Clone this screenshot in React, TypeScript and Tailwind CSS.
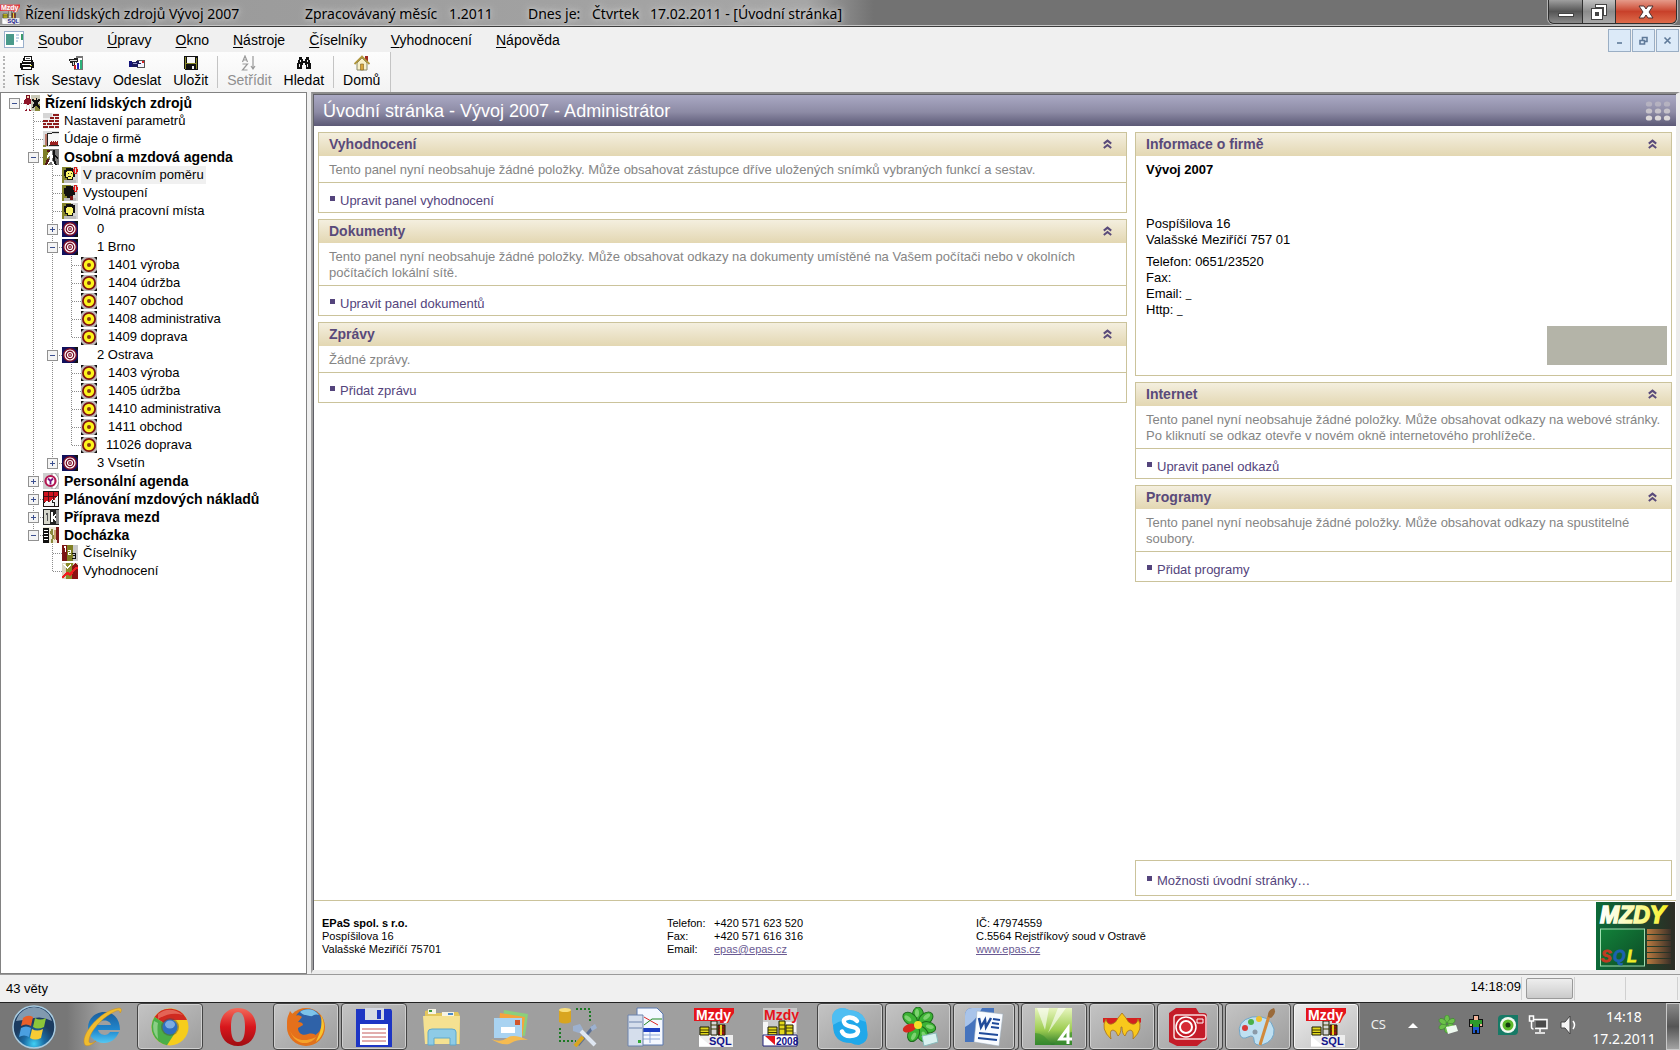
import React from "react";

type P = { children?: React.ReactNode };

/* ---------- small 16px pixel icons ---------- */

function Px({ children }: P) {
  return (
    <svg viewBox="0 0 16 16" className="size-4 shrink-0" shapeRendering="crispEdges" aria-hidden="true">
      {children}
    </svg>
  );
}

const PeopleIcon = () => (
  <Px>
    <path d="M7 0h9v16H7z" fill="#c9c9b8" />
    <path d="M11 9h5v7h-5z" fill="#8a8a3c" />
    <path d="M2 0h4v4H2z" fill="#7a1020" />
    <path d="M3 1h2v2H3z" fill="#f2d5b0" />
    <path d="M1 4h6v5H6v6h1v1H5v-6H3v6H1v-1h1V9H0V5h1z" fill="#8e1428" />
    <path d="M2 9h1v5H2zM5 9h1v5H5z" fill="#e8e8e8" />
    <path d="M8 4h2V3h3v2l2-1h1v1l-2 2v2l2 3v2h-1l-3-4-2 3H8l2-5-2-2z" fill="#111" />
    <path d="M10 3h2v2h-2z" fill="#f2d5b0" />
  </Px>
);
const BricksIcon = () => (
  <Px>
    <path d="M0 0h16v16H0z" fill="#f1f1f1" />
    <path d="M0 0h9v5H0z" fill="#d6d6d6" />
    <path d="M10 1h6v2h-6zM7 4h4v2H7zM12 4h4v2h-4zM0 7h5v2H0zM6 7h5v2H6zM12 7h4v2h-4zM0 10h3v2H0zM4 10h5v2H4zM10 10h6v2h-6zM0 13h5v2H0zM6 13h5v2H6zM12 13h4v2h-4z" fill="#8e1c1c" />
  </Px>
);
const FactoryIcon = () => (
  <Px>
    <path d="M0 0h16v16H0z" fill="#dcdcdc" />
    <path d="M5 3h11v11H5z" fill="#f7f7f7" />
    <path d="M2 3h2v12H2z" fill="#b9786a" />
    <path d="M4 3V2h5V1h7v1H9v1H5v12H4z" fill="#222" />
    <path d="M7 11l2-2v2l2-2v2l2-2v2l2-2v5H7z" fill="#9a2020" />
    <path d="M0 14h3v2H0z" fill="#8a8a3c" />
    <path d="M6 14h10v1H6z" fill="#222" />
  </Px>
);
const WalkerIcon = () => (
  <Px>
    <path d="M0 0h6v16H0z" fill="#7f7f24" />
    <path d="M6 0h10v16H6z" fill="#777" />
    <path d="M4 1h3v2H4zM4 10h2l-1 6H2z" fill="#541717" />
    <path d="M7 2h2v3l2 3v1H9v2l3 4v1h-2l-2-4-3 4H4l3-6V6L4 9V7z" fill="#fff" />
    <path d="M10 1h2v4l3 4-1 1-2-2v3l2 5h-2l-2-5V5z" fill="#111" />
  </Px>
);
function FaceIcon({ variant }: { variant: "in" | "out" | "free" }) {
  return (
    <Px>
      <path d="M0 0h11v16H0z" fill="#85852b" />
      <path d="M9 0h7v16H9z" fill="#d3d3d3" />
      <path d="M2 13h12v3H2z" fill="#bdbdbd" />
      <path d="M4 1h7v1h2v8h-2v3H5v-2H3V9H2V3h2z" fill="#111" />
      {variant === "out" ? (
        <path d="M8 11h3v4H8z" fill="#7b1515" />
      ) : (
        <path d="M5 4h5v1h1v5h-1v2H6v-2H4V5h1z" fill="#f9f46a" />
      )}
      {variant === "in" && <path d="M6 6h1v1H6zM9 6h1v1H9zM6 9h3v1H6z" fill="#222" />}
      {variant !== "free" && <path d="M12 0h3v2h1v3h-1v2h-3V5h-1V2h1zM13 1v5h1V1z" fill="#d81a1a" fillRule="evenodd" />}
    </Px>
  );
}
const TargetIcon = () => (
  <svg viewBox="0 0 16 16" className="size-4 shrink-0" aria-hidden="true">
    <rect width="16" height="16" fill="#10105c" />
    <path d="M12 0h4v4zM12 16h4v-4z" fill="#111" />
    <circle cx="8" cy="8" r="7" fill="#7d0f28" />
    <circle cx="8" cy="8" r="5" fill="none" stroke="#fff" strokeWidth="1.200" />
    <circle cx="8" cy="8" r="2.500" fill="none" stroke="#fff" strokeWidth="1.200" />
    <circle cx="8" cy="8" r=".8" fill="#fff" />
  </svg>
);
const YellowTargetIcon = () => (
  <svg viewBox="0 0 16 16" className="size-4 shrink-0" aria-hidden="true">
    <rect width="16" height="16" fill="#bdb9b9" />
    <path d="M0 0h3L0 3zM16 0h-3l3 3zM0 16h3l-3-3zM16 16h-3l3-3z" fill="#111" />
    <circle cx="8" cy="8" r="7" fill="#7d1410" />
    <circle cx="8" cy="8" r="5.200" fill="#fdf51c" />
    <circle cx="8" cy="8" r="2" fill="#8a3a12" />
  </svg>
);
const PersonalIcon = () => (
  <svg viewBox="0 0 16 16" className="size-4 shrink-0" aria-hidden="true">
    <rect width="16" height="16" fill="#cfcfcf" />
    <path d="M9 0h3q4 4 4 8t-4 8H9z" fill="#fff" stroke="#999" />
    <circle cx="7.500" cy="8" r="5" fill="#fff" stroke="#b31651" strokeWidth="2.200" />
    <path d="M5 5.500l2.500 2.500L10 5.500M7.500 8v3.500" stroke="#7a1280" strokeWidth="1.800" fill="none" />
  </svg>
);
const ChartIcon = () => (
  <Px>
    <path d="M0 0h16v16H0z" fill="#1c1010" />
    <path d="M1 1h14v10H1z" fill="#d01420" />
    <path d="M5 1h1v10H5zM10 1h1v10h-1zM1 5h14v1H1z" fill="#501018" />
    <path d="M1 15v-3l3-2 2 2 3-4 2 2 3-5h1v10z" fill="#f3f3f3" />
    <path d="M9 9h1v2h2v4h-1v-3H9z" fill="#222" />
  </Px>
);
const PayIcon = () => (
  <Px>
    <path d="M0 0h16v16H0z" fill="#222" />
    <path d="M1 1h6v14H1z" fill="#d7d7cc" />
    <path d="M3 4h2v8H4V6H3z" fill="#555" />
    <path d="M8 3h2v4l3-3h1v1l-2 3 2 4h-2l-2-3v4H8z" fill="#fff" />
    <path d="M13 1h3v14h-3z" fill="#8d8d8d" />
  </Px>
);
const AttendanceIcon = () => (
  <Px>
    <path d="M0 0h16v16H0z" fill="#ede9d8" />
    <path d="M0 1h6v15H0z" fill="#111" />
    <path d="M1 3h4v1H1zM1 6h4v1H1zM1 9h4v1H1zM1 12h4v1H1z" fill="#fff" />
    <path d="M8 2h2v4l1 3-1 7H8l1-7-2-2z" fill="#8a8a3c" />
    <path d="M13 0h3v16h-2l-1-6z" fill="#7d1a1a" />
    <path d="M11 3h2v8l-2 3z" fill="#c8a46a" />
  </Px>
);
const DigitsIcon = () => (
  <Px>
    <path d="M0 0h16v16H0z" fill="#7f7f24" />
    <path d="M0 0h5v16H0z" fill="#7b1515" />
    <path d="M11 0h5v16h-5z" fill="#c9c9c9" />
    <path d="M2 1h2v6H3V3H2zM6 5h3v3H7v1h2v1H6V7h2V6H6z" fill="#fff" />
    <path d="M10 8h4v6h-4v-1h3v-2h-2v-1h2V9h-3z" fill="#111" />
  </Px>
);
const TrendIcon = () => (
  <Px>
    <path d="M0 0h16v16H0z" fill="#d9d4bf" />
    <path d="M4 0h7v16H4z" fill="#8a8a2a" />
    <path d="M10 3l3-3 3 3v13h-6z" fill="#8c1212" />
    <path d="M0 15v-2l5-4 3 1 5-6h3v2h-2L9 13l-4-1-4 3z" fill="#f02020" />
    <path d="M1 1h2v1h1v1h1v1h1V3h1V2h1V1h1v2H8v1H7v1H6v1H5V5H4V4H3V3H2V2H1z" fill="#fff" />
  </Px>
);

/* ---------- Mzdy application icon ---------- */

function MzdyIcon({ year, className }: { year?: boolean; className: string }) {
  const red = "#e5141b";
  return (
    <svg viewBox="0 0 40 40" className={className} aria-hidden="true">
      {year ? <path d="M1 1h34v38H1z" fill="#c9c9c9" /> : <path d="M5 28h34v12H5z" fill="#eee" />}
      {year && <path d="M1 15h5v13H1zM24 15h10v10H24z" fill="#f6f6f6" />}
      <g stroke="#1c1c00" strokeWidth="1">
        <path d="M6 20h9v8H6z" fill="#e2d71d" />
        <path d="M17 14h6v14h-6z" fill={year ? "#e2d71d" : "#d7d7d7"} />
        <path d="M24 18h7v10h-7z" fill={year ? "#e2d71d" : "#9c1414"} />
        <path d="M6 23h9M6 25.500h9M24 21h7M24 24h7M17 18h6M17 22h6" stroke="#3c3a00" />
      </g>
      {!year && <path d="M26 18h2v10h-2z" fill="#e8d01d" />}
      {!year && <path d="M0 1h40v5l-3 4-3 6h-8v-2H0z" fill={red} />}
      <text
        x="2"
        y="12.500"
        fontSize="14"
        fontWeight="bold"
        fontFamily="Liberation Sans, sans-serif"
        fill={year ? red : "#fff"}
      >
        Mzdy
      </text>
      {year ? <path d="M1 28h34v11H1z" fill="#fff" stroke="#23237a" /> : null}
      <path d={year ? "M3 29h10v9z" : "M5 29l12 10H5z"} fill={year ? red : "#fff"} />
      <text x={year ? 14 : 15} y="38" fontSize={year ? 10 : 11} fontWeight="bold" fontFamily="Liberation Sans, sans-serif" fill="#14148c">
        {year ? "2008" : "SQL"}
      </text>
    </svg>
  );
}

/* ---------- window chrome ---------- */

function TitleBar() {
  return (
    <header className="flex h-[27px] items-stretch border-b border-[#3c3c3c] bg-linear-to-r from-[#979797] via-[#a6a6a6] via-48% to-[#727272] to-52% shadow-[inset_0_-1px_0_#c4c4c4]">
      <div className="flex flex-1 items-center pt-px font-['Noto_Sans','Open_Sans',sans-serif] text-sm whitespace-pre text-black [text-shadow:0_0_8px_#ddd,0_0_4px_#ccc]">
        <MzdyIcon className="mr-[5px] size-5 shrink-0" />
        <span className="w-[280px]">Řízení lidských zdrojů Vývoj 2007</span>
        <span className="w-[144px]">Zpracovávaný měsíc</span>
        <span className="w-[79px]">1.2011</span>
        <span className="w-[64px]">Dnes je:</span>
        <span className="w-[58px]">Čtvrtek</span>
        <span>17.02.2011 - [Úvodní stránka]</span>
      </div>
      <div className="mr-[3px] flex h-6 overflow-hidden rounded-b-md border border-t-0 border-[#2f2f2f] shadow-[0_0_0_1px_#b5b5b5]">
        <button aria-label="Minimalizovat" className="flex w-[34px] items-end justify-center border-r border-[#2f2f2f] bg-linear-to-b from-[#9f9f9f] via-[#555] via-50% to-[#8b8b8b] pb-1.5">
          <span className="h-1 w-4 border border-[#444] bg-white" />
        </button>
        <button aria-label="Obnovit" className="flex w-[33px] items-center justify-center border-r border-[#2f2f2f] bg-linear-to-b from-[#c2c2c2] via-[#8b8b8b] via-50% to-[#a9a9a9]">
          <svg viewBox="0 0 18 18" className="size-[18px]" aria-hidden="true">
            <path d="M5 1h12v12h-4v4H1V5h4z" fill="#444" />
            <path d="M6 2h10v10h-2V4H6zM2 6h10v10H2zM5 9v4h4V9z" fill="#fff" fillRule="evenodd" />
          </svg>
        </button>
        <button aria-label="Zavřít" className="flex w-[60px] items-center justify-center bg-linear-to-b from-[#e59a8a] via-[#c8402a] via-50% to-[#dd6a4a]">
          <svg viewBox="0 0 16 14" className="h-3.5 w-4" aria-hidden="true">
            <path d="M1 1h5l2 3 2-3h5l-4 6 4 6h-5l-2-3-2 3H1l4-6z" fill="#fff" stroke="#4a3030" strokeWidth="1" />
          </svg>
        </button>
      </div>
    </header>
  );
}

const menus = ["Soubor", "Úpravy", "Okno", "Nástroje", "Číselníky", "Vyhodnocení", "Nápověda"];

function MdiButton({ label, d }: { label: string; d: string }) {
  return (
    <button aria-label={label} className="flex size-[23px] items-center justify-center border border-[#9aaec4] bg-[#dceaf8]">
      <svg viewBox="0 0 9 9" className="size-[9px]" aria-hidden="true">
        <path d={d} stroke="#5f7a99" strokeWidth="1.600" fill="none" />
      </svg>
    </button>
  );
}

function MenuBar() {
  return (
    <nav className="flex h-[25px] items-center pl-1 text-sm">
      <svg viewBox="0 0 20 17" className="mr-[2px] h-[17px] w-5" aria-hidden="true">
        <rect x=".5" y=".5" width="19" height="16" fill="#fff" stroke="#9ab0cc" />
        <rect x="2" y="3" width="8" height="11" fill="#4a9a8a" />
        <path d="M12 4h3M12 7h3M12 10h2" stroke="#88aacc" />
        <rect x="17" y="3" width="2" height="6" fill="#3c9a6c" />
      </svg>
      <div className="flex">
        {menus.map((m) => (
          <button key={m} className="px-3 leading-6">
            <span className="underline underline-offset-2">{m[0]}</span>
            {m.slice(1)}
          </button>
        ))}
      </div>
      <div className="mr-px ml-auto flex gap-px pt-px">
        <MdiButton label="Minimalizovat okno" d="M2 7h5" />
        <MdiButton label="Obnovit okno" d="M1 4.500h4.500v3.500H1zM3.500 4V1.500h4.500v4H6" />
        <MdiButton label="Zavřít okno" d="M1.500 1.500l6 6M7.500 1.500l-6 6" />
      </div>
    </nav>
  );
}

function Tool({ label, children, disabled }: P & { label: string; disabled?: boolean }) {
  return (
    <button disabled={disabled} className="flex flex-col items-center px-1.5 pt-[3px] leading-[18px] disabled:text-[#8f8f8f]">
      {children}
      {label}
    </button>
  );
}

function Toolbar() {
  return (
    <div className="flex h-10">
      <div className="flex border-r border-[#c4c4c4] bg-linear-to-b from-[#fdfdfd] to-[#f3f3f3] pr-1 pl-[3px] text-sm">
        <span className="my-1 mr-[3px] w-0 border-l-2 border-dotted border-[#b5b5b5]" />
        <Tool label="Tisk">
          <Px>
            <path d="M5 1h8v4h1v2h1v6h-2v2H2v-2H1V8h2V6h1z" fill="#111" />
            <path d="M6 2h6v3H6zM4 6h8v1H4zM3 9h9v1H3zM4 12h8v2H4z" fill="#fff" />
            <path d="M7 3h4v1H7z" fill="#555" />
            <path d="M11 10h2v1h-2z" fill="#c9c93a" />
          </Px>
        </Tool>
        <Tool label="Sestavy">
          <Px>
            <path d="M8 1h7v14H6V8h2z" fill="#777" />
            <path d="M9 3h5v11H7V8h2z" fill="#fff" />
            <path d="M1 4l9-1v4H7v4H4V8H2V6H1z" fill="#222" />
            <path d="M2 5h7v1H2zM5 7h1v3H5z" fill="#d8d8d8" />
            <path d="M6 10h2v4H6z" fill="#c22" />
            <path d="M9 8h2v6H9z" fill="#22b" />
            <path d="M12 5h2v9h-2z" fill="#2bb37a" />
          </Px>
        </Tool>
        <Tool label="Odeslat">
          <Px>
            <path d="M8 5h8v8H8z" fill="#555" />
            <path d="M9 6h6v6H9z" fill="#f5f5ff" />
            <path d="M13 6h2v2h-2z" fill="#d22" />
            <path d="M0 6h3v6H0z" fill="#14147a" />
            <path d="M3 7h4V6h3v2h2v1H9v3H3z" fill="#1b1b5c" />
            <path d="M4 8h4v1H4z" fill="#9494c9" />
          </Px>
        </Tool>
        <Tool label="Uložit">
          <Px>
            <path d="M1 1h14v14H2l-1-1z" fill="#111" />
            <path d="M2 2h1v12H2zM13 3h1v11h-1zM3 8h10v1H3z" fill="#8a8a2a" />
            <path d="M4 2h8v6H4z" fill="#f7f7f7" />
            <path d="M9 11h2v3H9z" fill="#eee" />
          </Px>
        </Tool>
        <span className="mx-[3px] my-1 border-l border-[#c4c4c4]" />
        <Tool label="Setřídit" disabled>
          <svg viewBox="0 0 16 16" className="size-4" fill="none" stroke="#999" strokeWidth="1.200" aria-hidden="true">
            <path d="M1.500 7L4 1l2.500 6M2.500 5h3M1.500 9h5l-5 6h5M12 1v12M10 11l2 3 2-3" />
          </svg>
        </Tool>
        <Tool label="Hledat">
          <Px>
            <path d="M3 2h3v2h1v2h2V4h1V2h3v3h1v3h1v6h-5v-4H9V8H7v2H6v4H1V8h1V5h1z" fill="#111" />
            <path d="M4 5h1v2H4zM3 9h1v3H3zM11 5h1v2h-1zM11 9h1v3h-1z" fill="#eee" />
          </Px>
        </Tool>
        <span className="mx-[3px] my-1 border-l border-[#c4c4c4]" />
        <Tool label="Domů">
          <svg viewBox="0 0 16 16" className="size-4" aria-hidden="true">
            <path d="M11 1h3v5h-3z" fill="#a02a20" />
            <path d="M3 8v7h10V8L8 3z" fill="#f8f0c8" stroke="#8a8a6a" />
            <path d="M.5 9L8 1.500 15.500 9" stroke="#b0963a" strokeWidth="1.800" fill="none" />
            <path d="M6.500 9h3v6h-3z" fill="#d8a63a" stroke="#7d6224" strokeWidth=".6" />
          </svg>
        </Tool>
      </div>
    </div>
  );
}

/* ---------- tree ---------- */

/* Guide letters: "." blank, "|" line, "t" branch, "l" last branch,
   "+" / "-" expander with line through, "P" / "M" expander closing the line, "R" root. */
type Node = { g: string; icon: React.ReactNode; t: string; bold?: boolean; sel?: boolean; pad?: string };

const leaf = (t: string, g: string, pad = "pl-1.5"): Node => ({ t, g, icon: <YellowTargetIcon />, pad });

const nodes: Node[] = [
  { g: "R", icon: <PeopleIcon />, t: "Řízení lidských zdrojů", bold: true },
  { g: ".t", icon: <BricksIcon />, t: "Nastavení parametrů" },
  { g: ".t", icon: <FactoryIcon />, t: "Údaje o firmě" },
  { g: ".-", icon: <WalkerIcon />, t: "Osobní a mzdová agenda", bold: true },
  { g: ".|t", icon: <FaceIcon variant="in" />, t: "V pracovním poměru", sel: true },
  { g: ".|t", icon: <FaceIcon variant="out" />, t: "Vystoupení" },
  { g: ".|t", icon: <FaceIcon variant="free" />, t: "Volná pracovní místa" },
  { g: ".|+", icon: <TargetIcon />, t: "0", pad: "pl-3.5" },
  { g: ".|-", icon: <TargetIcon />, t: "1 Brno", pad: "pl-3.5" },
  leaf("1401 výroba", ".||t"),
  leaf("1404 údržba", ".||t"),
  leaf("1407 obchod", ".||t"),
  leaf("1408 administrativa", ".||t"),
  leaf("1409 doprava", ".||l"),
  { g: ".|-", icon: <TargetIcon />, t: "2 Ostrava", pad: "pl-3.5" },
  leaf("1403 výroba", ".||t"),
  leaf("1405 údržba", ".||t"),
  leaf("1410 administrativa", ".||t"),
  leaf("1411 obchod", ".||t"),
  leaf("11026 doprava", ".||l", "pl-1"),
  { g: ".|P", icon: <TargetIcon />, t: "3 Vsetín", pad: "pl-3.5" },
  { g: ".+", icon: <PersonalIcon />, t: "Personální agenda", bold: true },
  { g: ".+", icon: <ChartIcon />, t: "Plánování mzdových nákladů", bold: true },
  { g: ".+", icon: <PayIcon />, t: "Příprava mezd", bold: true },
  { g: ".M", icon: <AttendanceIcon />, t: "Docházka", bold: true },
  { g: "..t", icon: <DigitsIcon />, t: "Číselníky" },
  { g: "..l", icon: <TrendIcon />, t: "Vyhodnocení" },
];

function Guide({ c }: { c: string }) {
  const full = "|t+-".includes(c);
  const half = "lPM".includes(c);
  const box = "+-PMR".includes(c);
  return (
    <svg viewBox="0 0 19 18" className="h-[18px] w-[19px] shrink-0" shapeRendering="crispEdges" aria-hidden="true">
      <g stroke="#8c8c8c" strokeDasharray="1 1">
        {(full || half) && <path d={full ? "M9.500 0v18" : "M9.500 0v9"} />}
        {c !== "." && c !== "|" && <path d="M10 9.500h9" />}
      </g>
      {box && (
        <>
          <rect x="4.500" y="4.500" width="10" height="10" rx="1" fill="#f4f4f4" stroke="#919191" />
          <path d={"+P".includes(c) ? "M7 9.500h5M9.500 7v5" : "M7 9.500h5"} stroke="#3b4f8f" />
        </>
      )}
    </svg>
  );
}

function Tree() {
  return (
    <aside className="w-[307px] shrink-0 overflow-hidden border border-[#828282] bg-white pt-px pl-1 text-black">
      <ul role="tree">
        {nodes.map((n) => (
          <li key={n.t} role="treeitem" aria-selected={!!n.sel} className="flex h-[18px] items-center whitespace-nowrap">
            {n.g.split("").map((c, i) => (
              <Guide key={i} c={c} />
            ))}
            {n.icon}
            <span className={n.pad ?? ""}>
              <span className={`${n.bold ? "text-sm font-bold" : "text-[13px]"} ${n.sel ? "bg-[#f0f0f0]" : ""} ml-[3px] block px-0.5 leading-[18px]`}>{n.t}</span>
            </span>
          </li>
        ))}
      </ul>
    </aside>
  );
}

/* ---------- main page ---------- */

function Panel({ title, children, link }: P & { title: string; link?: string }) {
  return (
    <section className="border border-[#cbc39b] text-[13px] leading-4">
      <div className="flex h-[23px] items-center bg-linear-to-b from-[#f4efdf] to-[#e3d7b2] pr-[14px] pb-0.5 pl-2.5">
        <h2 className="flex-1 text-sm leading-5 font-bold text-[#594a7a]">{title}</h2>
        <button aria-label={`Sbalit ${title}`}>
          <svg viewBox="0 0 9 10" className="h-2.5 w-[9px]" fill="none" stroke="#594a7a" strokeWidth="2" aria-hidden="true">
            <path d="M.8 4.600L4.500 1.600l3.700 3M.8 9L4.500 6 8.200 9" />
          </svg>
        </button>
      </div>
      {children}
      {link && (
        <div className="border-t border-[#cbc39b]">
          <Bullet>{link}</Bullet>
        </div>
      )}
    </section>
  );
}

function Bullet({ children }: P) {
  return (
    <a href="#" className="flex gap-[5px] pt-2.5 pb-[3px] pl-[11px] text-[13px] leading-4 text-[#54447c]">
      <span className="mt-[3px] size-[5px] bg-[#54447c]" />
      {children}
    </a>
  );
}

const Note = ({ children }: P) => <p className="pt-1.5 pr-1 pb-1 pl-2.5 text-[#858585]">{children}</p>;

function Page() {
  return (
    <main className="ml-1 flex min-w-0 flex-1 flex-col border-t-2 border-r-4 border-b-4 border-l-2 border-t-[#8c8c8c] border-r-[#ececec] border-b-[#ececec] border-l-[#a0a0a0] bg-white">
      <div className="flex flex-1 flex-col border-t border-l border-[#5f5f66]">
        <div className="flex h-[31px] items-center justify-between bg-linear-to-b from-[#aaa9c4] via-[#8d8ba5] via-55% to-[#5c5976] pr-1 pl-[9px]">
          <h1 className="text-lg leading-6 text-white">Úvodní stránka - Vývoj 2007 - Administrátor</h1>
          <svg viewBox="0 0 27 20" className="h-5 w-[27px]" aria-hidden="true">
            {[3, 10, 17].map((y) =>
              [4, 13, 22].map((x) => <ellipse key={`${x}-${y}`} cx={x} cy={y} rx="3.200" ry="2.600" fill={y === 17 ? "#dcd8d8" : y === 10 ? "#c6c2c9" : "#b5b2c0"} />)
            )}
          </svg>
        </div>
        <div className="grid flex-1 grid-cols-[809fr_537fr] gap-2 px-1 pt-1.5 pb-1">
          <div className="flex flex-col gap-1.5">
            <Panel title="Vyhodnocení" link="Upravit panel vyhodnocení">
              <Note>Tento panel nyní neobsahuje žádné položky. Může obsahovat zástupce dříve uložených snímků vybraných funkcí a sestav.</Note>
            </Panel>
            <Panel title="Dokumenty" link="Upravit panel dokumentů">
              <Note>
                Tento panel nyní neobsahuje žádné položky. Může obsahovat odkazy na dokumenty umístěné na Vašem počítači nebo v okolních
                <br />
                počítačích lokální sítě.
              </Note>
            </Panel>
            <Panel title="Zprávy" link="Přidat zprávu">
              <Note>Žádné zprávy.</Note>
            </Panel>
          </div>
          <div className="flex flex-col gap-1.5">
            <Panel title="Informace o firmě">
              <div className="pt-1.5 pl-2.5 text-black">
                <p className="mb-[38px] font-bold">Vývoj 2007</p>
                <p>Pospíšilova 16</p>
                <p className="mb-1.5">Valašské Meziříčí 757 01</p>
                <p>Telefon: 0651/23520</p>
                <p>Fax:</p>
                <p>Email: <a href="#" className="text-[10px] leading-none">_</a></p>
                <p>Http: <a href="#" className="text-[10px] leading-none">_</a></p>
              </div>
              <div className="mt-2 mr-1 mb-2.5 ml-auto h-[39px] w-[120px] bg-[#b4b4a8]" />
            </Panel>
            <Panel title="Internet" link="Upravit panel odkazů">
              <Note>
                Tento panel nyní neobsahuje žádné položky. Může obsahovat odkazy na webové stránky.
                <br />
                Po kliknutí se odkaz otevře v novém okně internetového prohlížeče.
              </Note>
            </Panel>
            <Panel title="Programy" link="Přidat programy">
              <Note>
                Tento panel nyní neobsahuje žádné položky. Může obsahovat odkazy na spustitelné
                <br />
                soubory.
              </Note>
            </Panel>
            <div className="mt-auto border border-[#cbc39b] pt-0.5 pb-[3px]">
              <Bullet>Možnosti úvodní stránky…</Bullet>
            </div>
          </div>
        </div>
        <footer className="grid h-[70px] grid-cols-[345fr_309fr_620fr_auto] border-t border-[#cbc39b] pl-2 text-[11px] leading-[13px] text-black">
          <address className="pt-4 not-italic">
            <b>EPaS spol. s r.o.</b>
            <br />
            Pospíšilova 16
            <br />
            Valašské Meziříčí 75701
          </address>
          <dl className="grid grid-cols-[47px_1fr] content-start pt-4">
            <dt>Telefon:</dt>
            <dd>+420 571 623 520</dd>
            <dt>Fax:</dt>
            <dd>+420 571 616 316</dd>
            <dt>Email:</dt>
            <dd><a href="#" className="text-[#6a5a92] underline">epas@epas.cz</a></dd>
          </dl>
          <p className="pt-4">
            IČ: 47974559
            <br />
            C.5564 Rejstříkový soud v Ostravě
            <br />
            <a href="#" className="text-[#6a5a92] underline">www.epas.cz</a>
          </p>
          <svg viewBox="0 0 79 68" className="mt-px mr-px h-[68px] w-[79px]" role="img" aria-label="MZDY SQL">
            <defs>
              <linearGradient id="lg" x2="1"><stop stopColor="#0c6a38" /><stop offset="1" stopColor="#2c2c24" /></linearGradient>
              <linearGradient id="lt" x2="1"><stop stopColor="#fff" /><stop offset=".5" stopColor="#fbfbb0" /><stop offset="1" stopColor="#f6f11e" /></linearGradient>
              <linearGradient id="lb" x2="1"><stop stopColor="#b9793f" /><stop offset="1" stopColor="#3a3028" /></linearGradient>
              <linearGradient id="lq" x2="1" y2="1"><stop stopColor="#12823a" /><stop offset="1" stopColor="#0d4a26" /></linearGradient>
            </defs>
            <rect width="79" height="68" fill="url(#lg)" />
            <text x="4" y="21" fontSize="23" fontWeight="bold" fontStyle="italic" fontFamily="Liberation Sans, sans-serif" fill="url(#lt)" stroke="url(#lt)" strokeWidth="1.500">MZDY</text>
            <rect x="4.500" y="27" width="44" height="37" fill="url(#lq)" stroke="#9fe0b0" />
            {[27, 33, 39, 45, 51, 57].map((y) => <rect key={y} x="51" y={y} width="24" height="5" fill="url(#lb)" />)}
            <g fontSize="16" fontWeight="bold" fontStyle="italic" fontFamily="Liberation Sans, sans-serif" strokeWidth=".8">
              <text x="5" y="60" fill="#c23a22" stroke="#c23a22">S</text>
              <text x="17" y="60" fill="#1c62b0" stroke="#1c62b0">Q</text>
              <text x="31" y="60" fill="#f0ee28" stroke="#f0ee28">L</text>
            </g>
          </svg>
        </footer>
      </div>
    </main>
  );
}

/* ---------- taskbar ---------- */

function Big({ children }: P) {
  return <svg viewBox="0 0 40 40" className="size-10" aria-hidden="true">{children}</svg>;
}

const tasks: { name: string; kind?: "open" | "active"; stack?: boolean; icon: React.ReactNode }[] = [
  {
    name: "Internet Explorer",
    icon: (
      <Big>
        <defs><linearGradient id="ie" x2="0" y2="1"><stop stopColor="#1c5e9c" /><stop offset=".6" stopColor="#2089d0" /><stop offset="1" stopColor="#55c8f2" /></linearGradient></defs>
        <path fillRule="evenodd" d="M22 5c10 0 16 7 16 18H16c1 5 9 7 12 2h9c-3 7-8 11-15 11-9 0-16-7-16-15.500S13 5 22 5zm-6 13h13c-1-6-12-6-13 0z" fill="url(#ie)" />
        <path d="M3 38C-3 29 18 3 37 1c3 0 3 3 1 5 0-3-2-3-6-1C19 11 6 27 7 35c1 2 4 1 7-1-4 4-9 6-11 4z" fill="#f0bc2e" stroke="#c98d1c" strokeWidth=".5" />
      </Big>
    ),
  },
  {
    name: "Chrome", kind: "open",
    icon: (
      <Big>
        <circle cx="20" cy="20" r="18.500" fill="#f6cd1c" />
        <path d="M20 20L4.500 10A18.500 18.500 0 0 1 37 13H20z" fill="#cf2a20" />
        <path d="M8 7q12-9 25 1-12-4-25 4z" fill="#f08a7a" opacity=".6" />
        <path d="M20 20L4.500 10A18.500 18.500 0 0 0 17 38.200l9-14z" fill="#4aae48" />
        <path d="M4 14q-3 10 4 18-1-12 0-16z" fill="#a6dba0" opacity=".7" />
        <circle cx="20" cy="20" r="9" fill="#4a4a4a" opacity=".45" />
        <circle cx="20" cy="20" r="7.500" fill="#2f6fc0" />
        <ellipse cx="20" cy="17.500" rx="5" ry="4" fill="#9cc6f0" opacity=".7" />
      </Big>
    ),
  },
  {
    name: "Opera",
    icon: (
      <Big>
        <defs><linearGradient id="op" x2="0" y2="1"><stop stopColor="#f36a5a" /><stop offset=".5" stopColor="#d8161c" /><stop offset="1" stopColor="#a00d12" /></linearGradient></defs>
        <path fillRule="evenodd" d="M20 1c11 0 18 8 18 19s-7 19-18 19S2 31 2 20 9 1 20 1zm0 4c-5 0-7 6-7 15s2 15 7 15 7-6 7-15-2-15-7-15z" fill="url(#op)" />
      </Big>
    ),
  },
  {
    name: "Firefox", kind: "open",
    icon: (
      <Big>
        <circle cx="20" cy="20" r="19" fill="#e0721c" />
        <circle cx="22" cy="16" r="14" fill="#2f62a8" />
        <path d="M14 5c5-4 14-4 19 3-5-2-6 2-9 1s-6 0-10-4z" fill="#7cc3ea" />
        <path d="M35 8c5 9 4 20-5 27 2-6 7-12 5-27z" fill="#f8c52e" />
        <path d="M1 16C1 9 3 8 4 4l4 5c3-1 6-1 8 1l-4 5c3 0 5 1 5 3l-5 3c0 6 5 8 10 6 4-1 8 0 8 2-4 6-14 10-20 6C4 32 1 25 1 16z" fill="#e5701b" />
        <path d="M4 24c4 9 14 12 26 6-5 8-20 10-26-6z" fill="#f5a32a" />
      </Big>
    ),
  },
  {
    name: "Total Commander", kind: "open",
    icon: (
      <Big>
        <path d="M2 2h35l1 2v36H2z" fill="#1d35c4" />
        <path d="M11 1h19v12H11z" fill="#d6dae4" />
        <path d="M23 3h4v9h-4z" fill="#1d35c4" />
        <path d="M6 17h28v21H6z" fill="#fff" />
        <path d="M8 22h24M8 26h24M8 30h24M8 34h24" stroke="#c45a5a" />
      </Big>
    ),
  },
  {
    name: "Průzkumník",
    icon: (
      <Big>
        <path d="M3 4l8-2v4h8l2-1h15l2 4v28H3z" fill="#e3c65c" />
        <path d="M6 2h8v5H6zM20 5h12v4H20z" fill="#f6f3e4" />
        <path d="M7 3h3v2H7z" fill="#3c9a3c" />
        <path d="M26 6h5v2h-5z" fill="#4a8ac9" />
        <path d="M1 9h37l-1 28H3z" fill="#f5e191" />
        <path d="M6 25q0-3 4-3h20q4 0 4 3v13h-6v-7H12v7H6z" fill="#8ecbe6" stroke="#5fa9cc" />
      </Big>
    ),
  },
  {
    name: "Windows Live Mail",
    icon: (
      <Big>
        <path d="M14 3l24 4-3 22-24-3z" fill="#8bcf7c" />
        <path d="M10 6l25 4-3 22-24-3z" fill="#f5a43c" />
        <path d="M4 11h28v20H4z" fill="#a9d3f1" />
        <path d="M11 20h14v6H11z" fill="#fff" />
        <path d="M25 13h5v5h-5z" fill="#d2562c" />
        <path d="M1 32q10 4 16-1t21 2q-10-1-17 3T1 32z" fill="#f5bb50" />
      </Big>
    ),
  },
  {
    name: "Databáze",
    icon: (
      <Big>
        <path d="M18 2h14v14M2 21v13h16" stroke="#1c7a24" strokeWidth="2" strokeDasharray="2 2" fill="none" />
        <path d="M1 3v12q6 3 12 0V3z" fill="#d9a520" />
        <ellipse cx="7" cy="3" rx="6" ry="2" fill="#f8de7c" />
        <path d="M36 19L20 38" stroke="#5a6f94" strokeWidth="3" />
        <path d="M19 20l18 18" stroke="#dfe7f2" strokeWidth="4" />
        <path d="M25 30l-8 9" stroke="#d9a520" strokeWidth="4" />
        <path d="M15 19l7-2 3 5-4 4-6-2zM32 20l5-3 2 4-5 3z" fill="#9db1cf" />
      </Big>
    ),
  },
  {
    name: "Server",
    icon: (
      <Big>
        <path d="M11 1h20l6 6v31H11z" fill="#f4f8ff" stroke="#5a78b0" />
        <path d="M18 10l14 8" stroke="#d22" /><path d="M18 18l8-6h10" stroke="#282" fill="none" />
        <path d="M16 21h18v4H16z" fill="#1c3ec4" />
        <path d="M16 28h18M16 32h18M24 25v11" stroke="#8fa8d8" />
        <path d="M2 8h15v31H2z" fill="#d5deec" stroke="#6d83ac" />
        <path d="M3 15h13M3 21h13" stroke="#6d83ac" />
        <path d="M12 33h3v3h-3z" fill="#3a3" />
      </Big>
    ),
  },
  { name: "Mzdy SQL", icon: <MzdyIcon className="size-10" /> },
  { name: "Mzdy 2008", icon: <MzdyIcon year className="size-10" /> },
  {
    name: "Skype", kind: "open",
    icon: (
      <Big>
        <path d="M11 1q5 0 8 2 18 1 18 20 3 12-8 15-5 0-8-2Q3 36 3 18-1 3 11 1z" fill="#20a8ea" />
        <path d="M11 1q5 0 8 2 14 1 17 12Q20 8 3 18-1 3 11 1z" fill="#6fcdf6" opacity=".6" />
        <path d="M27 14q-3-4-8-3.500-6 1-5 4.500t7 4.500q7 1 7 5-1 4.500-8 4.500-6 0-8-4.500" stroke="#fff" strokeWidth="4.400" fill="none" strokeLinecap="round" />
      </Big>
    ),
  },
  {
    name: "ICQ", kind: "open",
    icon: (
      <Big>
        {[0, 51, 103, 154, 206, 308].map((a) => (
          <ellipse key={a} cx="20" cy="8" rx="5.500" ry="8" fill="#3cb334" stroke="#1c6a1c" transform={`rotate(${a} 20 18)`} />
        ))}
        {[0, 51, 103, 154, 206, 308].map((a) => (
          <ellipse key={a} cx="19" cy="6" rx="2" ry="4" fill="#a8e89a" opacity=".6" transform={`rotate(${a} 20 18)`} />
        ))}
        <ellipse cx="20" cy="9" rx="4" ry="7" fill="#d8281e" transform="rotate(250 20 18)" />
        <circle cx="20" cy="18" r="4" fill="#f3df2a" />
        <path d="M24 29l14-3 2 9-14 4z" fill="#d9f1f0" stroke="#8bb" />
      </Big>
    ),
  },
  {
    name: "Word", kind: "open", stack: true,
    icon: (
      <Big>
        <path d="M8 1h22v34H1V9q0-8 7-8z" fill="#4573bd" />
        <path d="M1 20Q12 14 18 1H8Q1 1 1 9z" fill="#a9c4ea" />
        <path d="M13 4l26 3-4 32-25-4z" fill="#f8fbff" stroke="#9ab" strokeWidth=".5" />
        <path d="M15 11l2 9 4-7 1 7 5-9" stroke="#1f4a9a" strokeWidth="2.500" fill="none" />
        <path d="M29 12l7 1M28 16l7 1M27 20l8 1M15 26l19 2M14 31l19 2" stroke="#1f4a9a" strokeWidth="2" />
      </Big>
    ),
  },
  {
    name: "Verze 4", kind: "open",
    icon: (
      <Big>
        <defs><linearGradient id="v4" x2="0" y2="1"><stop stopColor="#e7f5bd" /><stop offset=".6" stopColor="#9ccc50" /><stop offset="1" stopColor="#2c7a2c" /></linearGradient></defs>
        <path d="M1 1h37v37H1z" fill="url(#v4)" />
        <path d="M3 1l8 22 4-22zM24 1L14 26 32 1z" fill="#fff" opacity=".6" />
        <path d="M1 26q10 0 16 12H1zM38 25q-12 2-18 13h18z" fill="#3a8f2e" opacity=".6" />
        <path d="M34 37V21L26 32h12" stroke="#fff" strokeWidth="3" fill="none" />
      </Big>
    ),
  },
  {
    name: "Maska", kind: "open",
    icon: (
      <Big>
        <path d="M1 11h38v4l-4 5H5l-4-5z" fill="#d42020" />
        <path d="M9 32Q-2 22 4 12q1 6 6 5 4-1 6-6l4-5 4 5q2 5 6 6 5 1 6-5 6 10-5 20 1-9-3-9-3 0-5 6-3-2-3-9h-1q0 7-3 9-2-6-5-6-4 0-2 9z" fill="#f8c81c" stroke="#a8721a" strokeWidth=".8" />
      </Big>
    ),
  },
  {
    name: "Kamera", kind: "open", stack: true,
    icon: (
      <Big>
        <path d="M8 1h20l3 5h5q3 0 3 3v22q0 3-4 3l-6 5H9l-8-4V6z" fill="#c41c28" />
        <rect x="6" y="8" width="32" height="24" rx="3" fill="none" stroke="#f6dada" strokeWidth="1.500" />
        <circle cx="18" cy="20" r="10" fill="none" stroke="#fff" strokeWidth="1.500" />
        <circle cx="18" cy="20" r="6" fill="#d62a34" stroke="#fff" strokeWidth="2" />
        <path d="M29 12h6v4h-6z" fill="none" stroke="#fff" />
      </Big>
    ),
  },
  {
    name: "Malování", kind: "open",
    icon: (
      <Big>
        <path d="M2 28Q-2 14 14 10q18-3 22 12 1 12-12 16-8 1-8-5t-6-3-8-2z" fill="#bfe0f2" stroke="#6fa5c8" />
        <circle cx="7" cy="21" r="3" fill="#d83a3a" />
        <circle cx="13" cy="15" r="3" fill="#4ab04a" />
        <circle cx="21" cy="12" r="3" fill="#f0c02e" />
        <circle cx="17" cy="25" r="2.500" fill="#8a9aa8" />
        <path d="M22 38L31 9" stroke="#d18a3c" strokeWidth="3" />
        <path d="M30 10q-1-7 6-9 3 5-3 10z" fill="#9a6a3a" />
      </Big>
    ),
  },
  { name: "Mzdy SQL okno", kind: "active", icon: <MzdyIcon className="size-10" /> },
];

function Tray() {
  return (
    <div className="flex items-stretch font-['Noto_Sans','Open_Sans',sans-serif] text-white">
      <div className="mr-2 flex items-center gap-2.5 pb-1">
        <span className="mr-3 text-[13px] text-[#eee]">CS</span>
        <button aria-label="Zobrazit skryté ikony" className="mr-2.5">
          <svg viewBox="0 0 10 6" className="h-1.5 w-2.5" aria-hidden="true"><path d="M0 6l5-5 5 5z" fill="#fff" /></svg>
        </button>
        <svg viewBox="0 0 20 20" className="size-5" aria-hidden="true">
          {[0, 60, 120, 180, 240, 300].map((a) => <ellipse key={a} cx="9" cy="4" rx="2.500" ry="4" fill="#6cc04a" stroke="#2f7a2a" strokeWidth=".5" transform={`rotate(${a} 9 9)`} />)}
          <path d="M8 12l10-2 2 6-10 3z" fill="#effaf0" />
        </svg>
        <svg viewBox="0 0 16 20" className="h-5 w-4" shapeRendering="crispEdges" aria-hidden="true">
          <path d="M5 0h6v4h4v8h-3v7H4v-7H1V4h4z" fill="#111" />
          <path d="M6 1h4v4H6zM2 9h2v2H2zM12 9h2v2h-2z" fill="#f3b49a" />
          <path d="M2 5h12v4H2zM5 5h6v7H5z" fill="#2c9a2c" />
          <path d="M5 12h6v6H9v-3H7v3H5z" fill="#1c5ad0" />
        </svg>
        <svg viewBox="0 0 20 20" className="ml-1 size-5" aria-hidden="true">
          <path d="M0 4q0-4 4-4h16v16q0 4-4 4H0z" fill="#177a66" />
          <circle cx="10" cy="10" r="8" fill="#f4faf2" />
          <circle cx="10" cy="10" r="5.500" fill="#5cb82a" />
          <circle cx="10" cy="10" r="2.500" fill="#143a10" />
        </svg>
        <svg viewBox="0 0 20 20" className="size-5" fill="none" stroke="#fff" strokeWidth="1.500" aria-hidden="true">
          <path d="M6 4.500h13v9H7M12 14v3M7 18h10" />
          <path d="M8 6h10v6H8z" fill="#4a4a4a" stroke="none" />
          <path d="M1.500 1v5h4V1zM3.500 6v6q0 2 2 2" />
        </svg>
        <svg viewBox="0 0 20 20" className="size-5" aria-hidden="true">
          <path d="M3 7h4l5-6v18l-5-6H3z" fill="#f3f3f3" stroke="#444" />
          <path d="M15 6q3 4 0 8" stroke="#fff" strokeWidth="1.500" fill="none" />
        </svg>
      </div>
      <time className="w-[76px] pt-[3px] text-center text-sm leading-[22px]">
        14:18
        <br />
        17.2.2011
      </time>
      <button aria-label="Zobrazit plochu" className="ml-1 w-3.5 border border-[#c9c9c9] bg-linear-to-b from-[#8a8a8a] via-[#555] to-[#a3a3a3]" />
    </div>
  );
}

function Taskbar() {
  return (
    <div className="flex h-12 items-stretch border-t border-[#222] bg-linear-to-r from-[#777] from-4% via-[#9f9f9f] via-6% to-[#9f9f9f]">
      <button aria-label="Start" className="w-[68px]">
        <svg viewBox="0 0 44 44" className="mx-auto size-11" aria-hidden="true">
          <defs><radialGradient id="st" cy=".9"><stop stopColor="#3fd0f5" /><stop offset=".5" stopColor="#1b6ca5" /><stop offset="1" stopColor="#1c3c60" /></radialGradient></defs>
          <circle cx="22" cy="22" r="21" fill="url(#st)" stroke="#a8cbe0" strokeWidth="1.500" />
          <path d="M4 16Q8 3 22 2q14 1 18 14-9-5-18-3T4 16z" fill="#c5d8e6" opacity=".6" />
          <path d="M11 13q5-4 10-1l-2 9q-5-3-10 0z" fill="#e8602a" />
          <path d="M23 13q5 3 11 0l-2 9q-6 3-11 0z" fill="#8cc63a" />
          <path d="M9 23q5-3 10 0l-2 9q-5-3-10 0z" fill="#4a9fe0" />
          <path d="M20 24q5 3 11 0l-2 9q-6 3-11 0z" fill="#f8cb34" />
        </svg>
      </button>
      <div className="flex">
        {tasks.map((t) => (
          <div key={t.name} className="flex w-[68px] px-px">
            <button
              aria-label={t.name}
              className={
                "flex flex-1 items-center justify-center " +
                (t.kind === "active"
                  ? "rounded-sm border border-[#444] bg-linear-to-br from-[#ededed] to-[#bdbdbd] shadow-[inset_0_0_0_1px_#f5f5f5]"
                  : t.kind === "open"
                  ? "rounded-sm border border-[#444] bg-linear-to-br from-[#c4c4c4] to-[#9d9d9d] shadow-[inset_0_0_0_1px_#cfcfcf]"
                  : "")
              }
            >
              {t.icon}
            </button>
            {t.stack && <span className="w-1 rounded-r-sm border border-l-0 border-[#444] bg-[#b5b5b5]" />}
          </div>
        ))}
      </div>
      <div className="flex flex-1 justify-end bg-[#767676]">
        <Tray />
      </div>
    </div>
  );
}

export default function App() {
  return (
    <div className="flex min-h-screen flex-col bg-[#f0f0f0] font-['Liberation_Sans',Arial,sans-serif] text-black">
      <TitleBar />
      <MenuBar />
      <Toolbar />
      <div className="flex flex-1">
        <Tree />
        <Page />
      </div>
      <div className="flex h-7 items-stretch border-t border-[#9a9a9a] text-[13px]">
        <span className="flex-1 self-center pl-1.5">43 věty</span>
        <span className="self-center pb-1 whitespace-nowrap">14:18:09</span>
        <span className="my-0.5 mr-1 border-l border-[#d0d0d0]" />
        <button aria-label="Stav" className="my-[3px] w-[47px] rounded-xs border border-[#9a9a9a] bg-linear-to-b from-[#eee] via-[#ddd] via-50% to-[#cacaca]" />
        <span className="my-0.5 ml-px w-[52px] border-x border-[#d0d0d0]" />
        <span className="my-0.5 mr-0.5 w-[52px] border-r border-[#d0d0d0]" />
      </div>
      <Taskbar />
    </div>
  );
}
